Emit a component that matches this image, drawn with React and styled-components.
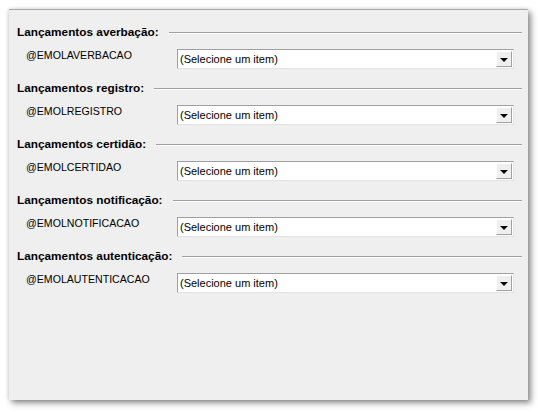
import styled, { createGlobalStyle } from "styled-components";

const GlobalStyle = createGlobalStyle`
  html, body {
    margin: 0;
    padding: 0;
    background: #ffffff;
  }
  body {
    font-family: "Liberation Sans", Arial, sans-serif;
    font-size: 11px;
    color: #000000;
  }
`;

const sections = [
  { title: "Lançamentos averbação:", field: "@EMOLAVERBACAO" },
  { title: "Lançamentos registro:", field: "@EMOLREGISTRO" },
  { title: "Lançamentos certidão:", field: "@EMOLCERTIDAO" },
  { title: "Lançamentos notificação:", field: "@EMOLNOTIFICACAO" },
  { title: "Lançamentos autenticação:", field: "@EMOLAUTENTICACAO" },
];

const App = () => {
  return (
    <>
      <GlobalStyle />
      <Page>
        <Panel>
          {sections.map((each) => (
            <Section key={each.field}>
              <Heading>
                <HeadingText>{each.title}</HeadingText>
                <HeadingLine />
              </Heading>
              <Row>
                <FieldLabel>{each.field}</FieldLabel>
                <Combo>
                  <ComboText>(Selecione um item)</ComboText>
                  <ComboButton>
                    <Arrow />
                  </ComboButton>
                </Combo>
              </Row>
            </Section>
          ))}
        </Panel>
      </Page>
    </>
  );
};

export default App;

const Page = styled.div`
  width: 541px;
  height: 413px;
  padding: 9px 0 0 9px;
  box-sizing: border-box;
`;

const Panel = styled.div`
  width: 519px;
  height: 391px;
  box-sizing: border-box;
  background: #efefef;
  border-top: 1px solid #a9a9a9;
  padding: 14px 6px 0 8px;
  box-shadow: 3px 3px 6px rgba(0, 0, 0, 0.45), -1px 0 4px rgba(0, 0, 0, 0.12);
`;

const Section = styled.div`
  display: flex;
  flex-direction: column;
  height: 56px;
`;

const Heading = styled.div`
  display: flex;
  align-items: center;
  height: 16px;
`;

const HeadingText = styled.span`
  font-weight: bold;
  font-size: 11.8px;
  white-space: nowrap;
`;

const HeadingLine = styled.div`
  flex: 1;
  height: 1px;
  margin: 1px 0 0 10px;
  background: #a0a0a0;
  border-bottom: 1px solid #ffffff;
`;

const Row = styled.div`
  display: flex;
  margin-top: 9px;
  height: 20px;
`;

const FieldLabel = styled.span`
  width: 160px;
  padding-left: 9px;
  box-sizing: border-box;
  font-size: 10.6px;
  line-height: 13px;
  align-self: flex-start;
`;

const Combo = styled.div`
  display: flex;
  align-items: center;
  width: 337px;
  height: 20px;
  box-sizing: border-box;
  background: #ffffff;
  border: 1px solid;
  border-color: #a0a0a0 #e3e3e3 #e3e3e3 #a0a0a0;
  padding: 0 1px 0 2px;
`;

const ComboText = styled.span`
  flex: 1;
  font-size: 11px;
`;

const ComboButton = styled.div`
  width: 16px;
  height: 16px;
  box-sizing: border-box;
  display: flex;
  align-items: center;
  justify-content: center;
  background: #efefef;
  border: 1px solid;
  border-color: #ffffff #a0a0a0 #a0a0a0 #ffffff;
`;

const Arrow = styled.div`
  width: 0;
  height: 0;
  border-left: 4px solid transparent;
  border-right: 4px solid transparent;
  border-top: 4px solid #000000;
  margin-top: 1px;
`;
